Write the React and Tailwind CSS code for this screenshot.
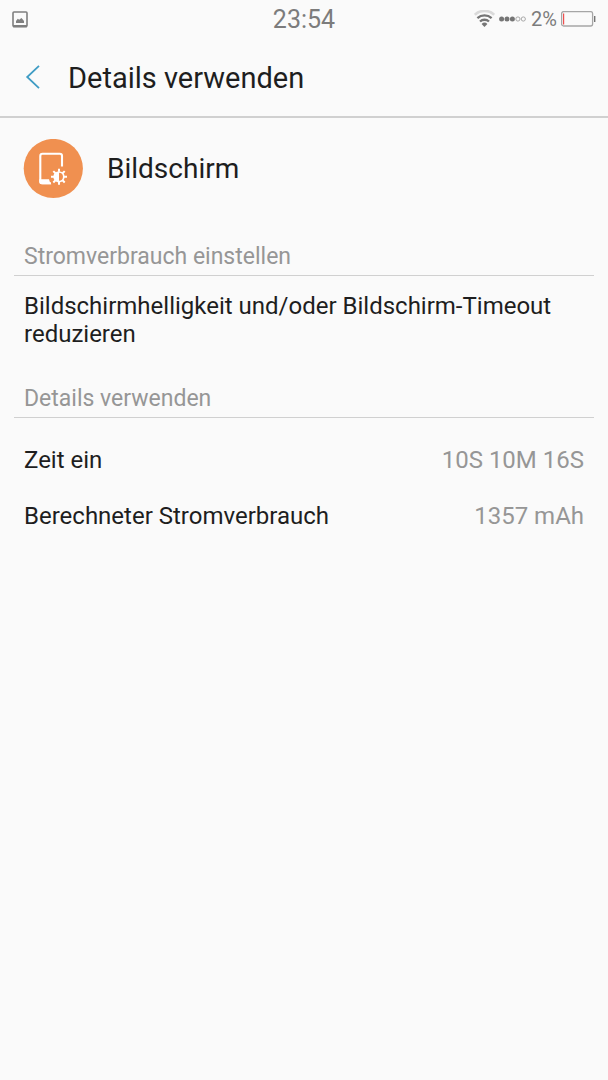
import React from 'react';

const usage = [
    { label: 'Zeit ein', value: '10S 10M 16S' },
    { label: 'Berechneter Stromverbrauch', value: '1357 mAh' },
];

function PictureIcon() {
    return (
        <svg width="16" height="17" viewBox="0 0 16 17" aria-hidden="true">
            <rect x="1" y="1" width="14" height="14.5" rx="1" fill="none" stroke="#7f7f7f" strokeWidth="1.6" />
            <path d="M1 14h14v2.4H1z" fill="#7f7f7f" />
            <path d="M4 12V10l1.8-2.2 1.4 1L9.4 7l1.2 1.2L12 10v2z" fill="#7f7f7f" />
        </svg>
    );
}

function WifiIcon() {
    return (
        <svg width="21" height="17" viewBox="0 0 21 17" fill="none" strokeWidth="2.3" className="mb-0.5" aria-hidden="true">
            <path d="M0.8 4.8a14.2 14.2 0 0 1 19.4 0" stroke="#dadada" strokeWidth="2.8" />
            <path d="M3.4 8.2a10.4 10.4 0 0 1 14.2 0" stroke="#757575" />
            <path d="M6 11.5a6.6 6.6 0 0 1 9 0" stroke="#757575" />
            <path d="M10.5 17 7.6 14a4.2 4.2 0 0 1 5.8 0z" fill="#757575" />
        </svg>
    );
}

function SignalDots() {
    return (
        <svg width="28" height="6" viewBox="0 0 28 6" aria-hidden="true">
            <g fill="#757575">
                <circle cx="2.6" cy="3" r="2.5" />
                <circle cx="8" cy="3" r="2.5" />
                <circle cx="13.4" cy="3" r="2.5" />
            </g>
            <g fill="none" stroke="#a0a0a0" strokeWidth="0.9">
                <circle cx="18.9" cy="3" r="2.1" />
                <circle cx="24.3" cy="3" r="2.1" />
            </g>
        </svg>
    );
}

function BatteryIcon() {
    return (
        <svg width="35" height="16" viewBox="0 0 35 16" aria-hidden="true">
            <rect x="0.6" y="0.6" width="31" height="14.4" rx="2" fill="none" stroke="#a6a6a6" strokeWidth="1.3" />
            <path d="M2 2.5h1.2v11H2z" fill="#f0504f" />
            <path d="M33 5h1.4v6H33z" fill="#757575" />
        </svg>
    );
}

function ScreenIcon() {
    return (
        <svg className="size-[60px] shrink-0" viewBox="0 0 60 60" aria-hidden="true">
            <circle cx="30.3" cy="29.5" r="29.6" fill="#f09050" />
            <path
                d="M39 27.5V17a2.2 2.2 0 0 0-2.2-2.2H19.5a2.2 2.2 0 0 0-2.2 2.2v25a2.2 2.2 0 0 0 2.2 2.2H28"
                fill="none"
                stroke="#fff"
                strokeWidth="2.1"
            />
            <path d="M16.3 40.3H26a11 11 0 0 0 2.4 5H18.5a2.2 2.2 0 0 1-2.2-2.3z" fill="#fff" />
            <g transform="translate(36 37.8)">
                <circle r="4.8" fill="none" stroke="#fff" strokeWidth="1.7" />
                <path d="M0-4.8a4.8 4.8 0 0 0 0 9.6z" fill="#fff" />
                <path
                    d="M0-8v3M0 5v3M-8 0h3M5 0h3M-5.7-5.7l2.2 2.2M3.5 3.5l2.2 2.2M-5.7 5.7l2.2-2.2M3.5-3.5l2.2-2.2"
                    stroke="#fff"
                    strokeWidth="2"
                />
            </g>
        </svg>
    );
}

function StatusBar() {
    return (
        <div className="grid h-[38px] grid-cols-[1fr_auto_1fr] items-center px-3 text-[#7c7c7c]">
            <PictureIcon />
            <span className="pt-0.5 text-[25px] leading-7">23:54</span>
            <div className="flex items-center justify-end gap-1">
                <WifiIcon />
                <SignalDots />
                <span className="text-xl leading-7">2%</span>
                <BatteryIcon />
            </div>
        </div>
    );
}

function SectionTitle({ children }) {
    return (
        <h2 className="mx-[14px] border-b border-[#d0d0d0] px-[10px] pb-1 text-[23px] leading-7 text-[#969696]">
            {children}
        </h2>
    );
}

export default function App() {
    return (
        <div className="min-h-screen bg-[#fafafa] font-['Roboto',sans-serif] text-[#1e1e1e]">
            <StatusBar />

            <header className="flex h-20 items-center border-b-2 border-[#d0d0d0] pl-6">
                <button type="button" aria-label="Zurück" className="mr-6 shrink-0">
                    <svg width="20" height="24" viewBox="0 0 20 24" fill="none" stroke="#3f9cc4" strokeWidth="1.8">
                        <path d="M15 0.8 3.2 12 15 23.2" />
                    </svg>
                </button>
                <h1 className="pt-0.5 text-[29px] leading-9">Details verwenden</h1>
            </header>

            <main>
                <div className="flex items-center gap-6 px-[23px] pt-[21px]">
                    <ScreenIcon />
                    <span className="text-[28px] leading-8">Bildschirm</span>
                </div>

                <section className="pt-11">
                    <SectionTitle>Stromverbrauch einstellen</SectionTitle>
                    <p className="px-6 pt-4 text-2xl leading-7">
                        Bildschirmhelligkeit und/oder Bildschirm-Timeout reduzieren
                    </p>
                </section>

                <section className="pt-[37px]">
                    <SectionTitle>Details verwenden</SectionTitle>
                    <dl className="px-6 pt-[14px] text-2xl leading-7">
                        {usage.map(({ label, value }) => (
                            <div key={label} className="flex h-14 items-center justify-between">
                                <dt>{label}</dt>
                                <dd className="text-[#969696]">{value}</dd>
                            </div>
                        ))}
                    </dl>
                </section>
            </main>
        </div>
    );
}
